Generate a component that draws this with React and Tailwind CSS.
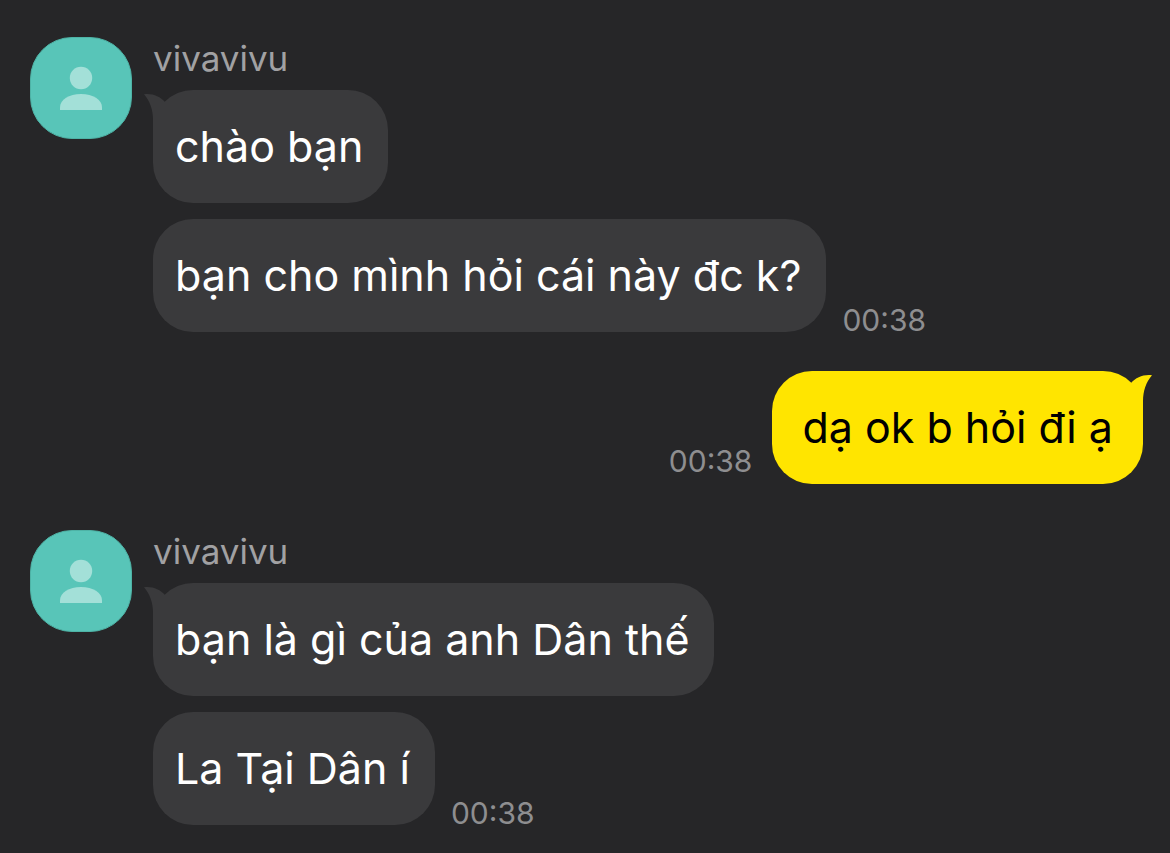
import clsx from "clsx";

const groups = [
  {
    sender: "vivavivu",
    messages: ["chào bạn", "bạn cho mình hỏi cái này đc k?"],
    time: "00:38",
  },
  { mine: true, messages: ["dạ ok b hỏi đi ạ"], time: "00:38" },
  {
    sender: "vivavivu",
    messages: ["bạn là gì của anh Dân thế", "La Tại Dân í"],
    time: "00:38",
  },
];

function Avatar() {
  return (
    <div className="flex size-[102px] shrink-0 items-center justify-center rounded-[42px] border border-[#4eb3a6] bg-[#58c5b8]">
      <svg className="h-11 w-[42px]" viewBox="0 0 42 44" fill="#a3e0d8" aria-hidden="true">
        <circle cx="21" cy="12" r="11.2" />
        <path d="M0 44v-2.5C0 33.5 9 28 21 28s21 5.5 21 13.5V44z" />
      </svg>
    </div>
  );
}

function Tail({ mine }) {
  return (
    <svg
      className={clsx(
        "absolute top-0 h-10 w-[21px]",
        mine ? "-right-[9px] -scale-x-100 fill-[#ffe500]" : "-left-[9px] fill-[#3a3a3c]"
      )}
      viewBox="0 0 21 40"
      aria-hidden="true"
    >
      <path d="M0 4.2C9 3.2 16 6.5 21 12V40H9V30C9 20 6 11 0 4.2z" />
    </svg>
  );
}

function Bubble({ text, mine, tail }) {
  return (
    <div
      className={clsx(
        "relative rounded-[40px] py-7 text-[43px] leading-[57px]",
        mine ? "bg-[#ffe500] px-[30px] text-black" : "bg-[#3a3a3c] pr-[25px] pl-[22px] text-white"
      )}
    >
      {tail && <Tail mine={mine} />}
      <p>{text}</p>
    </div>
  );
}

function Time({ children }) {
  return <time className="block text-[30px] leading-6 text-[#8e8e90]">{children}</time>;
}

function MyGroup({ group }) {
  return (
    <section className="mb-[7px] flex items-end justify-end gap-5 pr-[27px]">
      <div className="pb-[11px]">
        <Time>{group.time}</Time>
      </div>
      <Bubble text={group.messages[0]} mine tail />
    </section>
  );
}

function TheirGroup({ group }) {
  return (
    <section className="flex items-start gap-[21px] pl-[30px]">
      <Avatar />
      <div className="min-w-0">
        <h2 className="pb-[11px] text-[35px] leading-[42px] text-[#a1a1a3]">{group.sender}</h2>
        <div className="flex flex-col gap-4">
          {group.messages.map((text, i) => (
            <div key={text} className="flex items-end gap-4">
              <Bubble text={text} tail={i === 0} />
              {i === group.messages.length - 1 && <Time>{group.time}</Time>}
            </div>
          ))}
        </div>
      </div>
    </section>
  );
}

export default function App() {
  return (
    <main className="flex min-h-screen flex-col gap-[39px] bg-[#262628] pt-[37px] pb-7 font-['Inter',sans-serif]">
      {groups.map((group, i) =>
        group.mine ? <MyGroup key={i} group={group} /> : <TheirGroup key={i} group={group} />
      )}
    </main>
  );
}
